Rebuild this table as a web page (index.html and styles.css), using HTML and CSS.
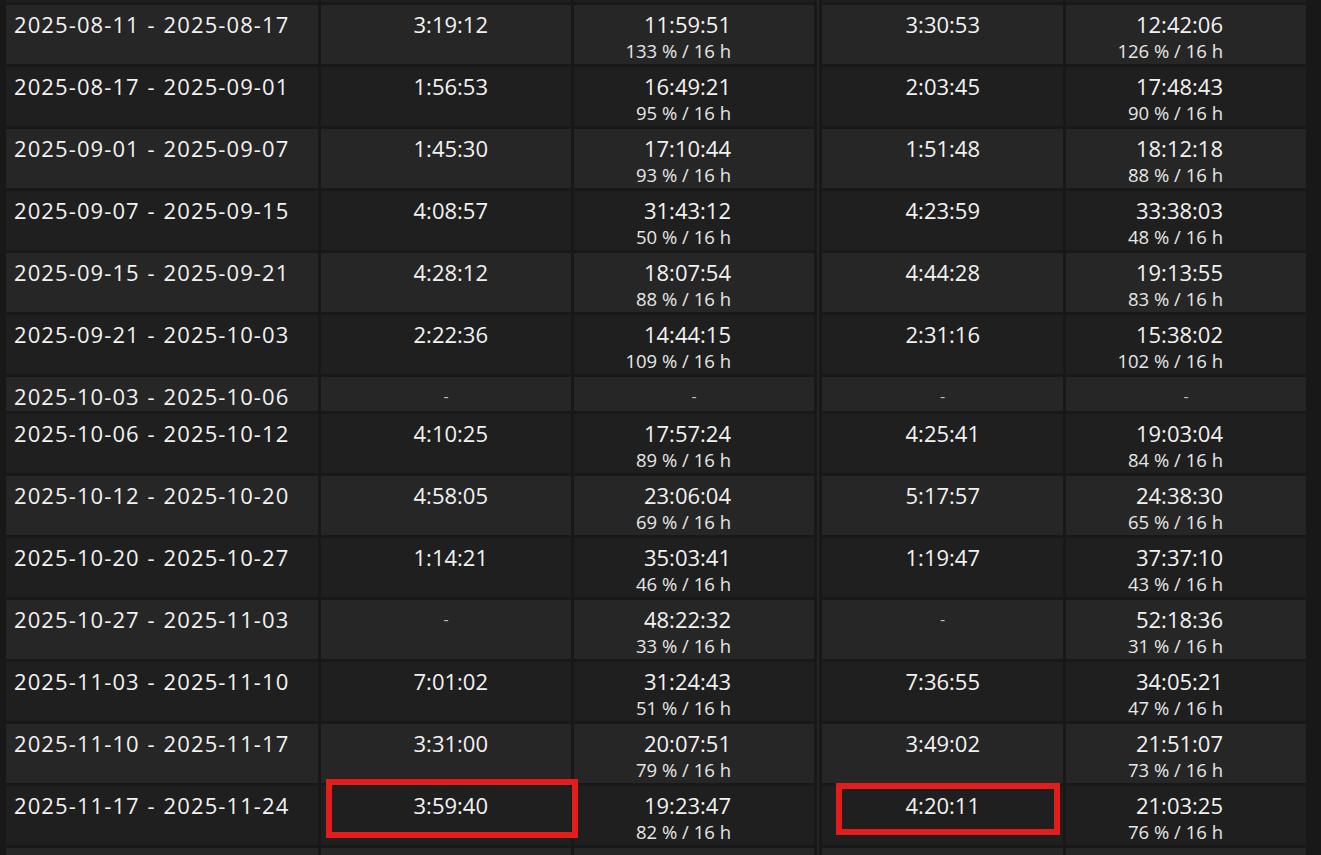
FILE: index.html
```html
<!DOCTYPE html>
<html>
<head>
<meta charset="utf-8">
<link rel="stylesheet" href="styles.css">
</head>
<body>
<div class="table">
  <div class="row even prev">
    <div class="c"></div>
    <div class="c"></div>
    <div class="c"></div>
    <div class="c"></div>
    <div class="c"></div>
  </div>
  <div class="row odd">
    <div class="c date">2025-08-11 - 2025-08-17</div>
    <div class="c t">3:19:12</div>
    <div class="c t"><div class="v">11:59:51</div><div class="s">133 % / 16 h</div></div>
    <div class="c t">3:30:53</div>
    <div class="c t"><div class="v">12:42:06</div><div class="s">126 % / 16 h</div></div>
  </div>
  <div class="row even">
    <div class="c date">2025-08-17 - 2025-09-01</div>
    <div class="c t">1:56:53</div>
    <div class="c t"><div class="v">16:49:21</div><div class="s">95 % / 16 h</div></div>
    <div class="c t">2:03:45</div>
    <div class="c t"><div class="v">17:48:43</div><div class="s">90 % / 16 h</div></div>
  </div>
  <div class="row odd">
    <div class="c date">2025-09-01 - 2025-09-07</div>
    <div class="c t">1:45:30</div>
    <div class="c t"><div class="v">17:10:44</div><div class="s">93 % / 16 h</div></div>
    <div class="c t">1:51:48</div>
    <div class="c t"><div class="v">18:12:18</div><div class="s">88 % / 16 h</div></div>
  </div>
  <div class="row even">
    <div class="c date">2025-09-07 - 2025-09-15</div>
    <div class="c t">4:08:57</div>
    <div class="c t"><div class="v">31:43:12</div><div class="s">50 % / 16 h</div></div>
    <div class="c t">4:23:59</div>
    <div class="c t"><div class="v">33:38:03</div><div class="s">48 % / 16 h</div></div>
  </div>
  <div class="row odd">
    <div class="c date">2025-09-15 - 2025-09-21</div>
    <div class="c t">4:28:12</div>
    <div class="c t"><div class="v">18:07:54</div><div class="s">88 % / 16 h</div></div>
    <div class="c t">4:44:28</div>
    <div class="c t"><div class="v">19:13:55</div><div class="s">83 % / 16 h</div></div>
  </div>
  <div class="row even">
    <div class="c date">2025-09-21 - 2025-10-03</div>
    <div class="c t">2:22:36</div>
    <div class="c t"><div class="v">14:44:15</div><div class="s">109 % / 16 h</div></div>
    <div class="c t">2:31:16</div>
    <div class="c t"><div class="v">15:38:02</div><div class="s">102 % / 16 h</div></div>
  </div>
  <div class="row odd">
    <div class="c date">2025-10-03 - 2025-10-06</div>
    <div class="c dash">-</div>
    <div class="c dash">-</div>
    <div class="c dash">-</div>
    <div class="c dash">-</div>
  </div>
  <div class="row even">
    <div class="c date">2025-10-06 - 2025-10-12</div>
    <div class="c t">4:10:25</div>
    <div class="c t"><div class="v">17:57:24</div><div class="s">89 % / 16 h</div></div>
    <div class="c t">4:25:41</div>
    <div class="c t"><div class="v">19:03:04</div><div class="s">84 % / 16 h</div></div>
  </div>
  <div class="row odd">
    <div class="c date">2025-10-12 - 2025-10-20</div>
    <div class="c t">4:58:05</div>
    <div class="c t"><div class="v">23:06:04</div><div class="s">69 % / 16 h</div></div>
    <div class="c t">5:17:57</div>
    <div class="c t"><div class="v">24:38:30</div><div class="s">65 % / 16 h</div></div>
  </div>
  <div class="row even">
    <div class="c date">2025-10-20 - 2025-10-27</div>
    <div class="c t">1:14:21</div>
    <div class="c t"><div class="v">35:03:41</div><div class="s">46 % / 16 h</div></div>
    <div class="c t">1:19:47</div>
    <div class="c t"><div class="v">37:37:10</div><div class="s">43 % / 16 h</div></div>
  </div>
  <div class="row odd">
    <div class="c date">2025-10-27 - 2025-11-03</div>
    <div class="c dash">-</div>
    <div class="c t"><div class="v">48:22:32</div><div class="s">33 % / 16 h</div></div>
    <div class="c dash">-</div>
    <div class="c t"><div class="v">52:18:36</div><div class="s">31 % / 16 h</div></div>
  </div>
  <div class="row even">
    <div class="c date">2025-11-03 - 2025-11-10</div>
    <div class="c t">7:01:02</div>
    <div class="c t"><div class="v">31:24:43</div><div class="s">51 % / 16 h</div></div>
    <div class="c t">7:36:55</div>
    <div class="c t"><div class="v">34:05:21</div><div class="s">47 % / 16 h</div></div>
  </div>
  <div class="row odd">
    <div class="c date">2025-11-10 - 2025-11-17</div>
    <div class="c t">3:31:00</div>
    <div class="c t"><div class="v">20:07:51</div><div class="s">79 % / 16 h</div></div>
    <div class="c t">3:49:02</div>
    <div class="c t"><div class="v">21:51:07</div><div class="s">73 % / 16 h</div></div>
  </div>
  <div class="row even">
    <div class="c date">2025-11-17 - 2025-11-24</div>
    <div class="c t">3:59:40</div>
    <div class="c t"><div class="v">19:23:47</div><div class="s">82 % / 16 h</div></div>
    <div class="c t">4:20:11</div>
    <div class="c t"><div class="v">21:03:25</div><div class="s">76 % / 16 h</div></div>
  </div>
  <div class="row odd next">
    <div class="c"></div>
    <div class="c"></div>
    <div class="c"></div>
    <div class="c"></div>
    <div class="c"></div>
  </div>
</div>
<div class="mark mark-a"></div>
<div class="mark mark-b"></div>
</body>
</html>
```
FILE: styles.css
```css
html, body {
  margin: 0;
  padding: 0;
}
body {
  position: relative;
  width: 1321px;
  height: 855px;
  overflow: hidden;
  background: #181818;
  font-family: "Open Sans", "Noto Sans", sans-serif;
  color: #f2f2f2;
}
.table {
  display: flex;
  flex-direction: column;
  gap: 3px;
  width: 1300px;
  padding-left: 6px;
  margin-top: -57px;
  background: linear-gradient(to right, #181818 0, #181818 817px, #242424 817px, #242424 819px, #181818 819px);
}
.row {
  display: grid;
  grid-template-columns: 312px 250px 240px 246px 240px;
  column-gap: 3px;
}
.prev {
  height: 59px;
}
.next {
  height: 7px;
}
.c {
  padding: 5px 0 1px;
  font-size: 22px;
  line-height: 28px;
}
.odd .c { background: #262626; }
.even .c { background: #1f1f1f; }
.row .c:nth-child(4) { margin-left: 5px; }
.prev .c, .next .c { padding: 0; }
.date {
  padding-left: 8px;
  white-space: nowrap;
  letter-spacing: 1.1px;
  word-spacing: 1px;
}
.t {
  text-align: right;
  padding-right: 83px;
}
.v {
  line-height: 28px;
}
.s {
  font-size: 18.5px;
  line-height: 25px;
  color: #e6e6e6;
}
.dash {
  text-align: center;
  color: #bdbdbd;
  font-size: 16px;
}
.mark {
  position: absolute;
  border: 6px solid #e31c1c;
  box-sizing: border-box;
}
.mark-a {
  left: 326px;
  top: 779px;
  width: 252px;
  height: 59px;
}
.mark-b {
  left: 836px;
  top: 783px;
  width: 224px;
  height: 52px;
}
```
